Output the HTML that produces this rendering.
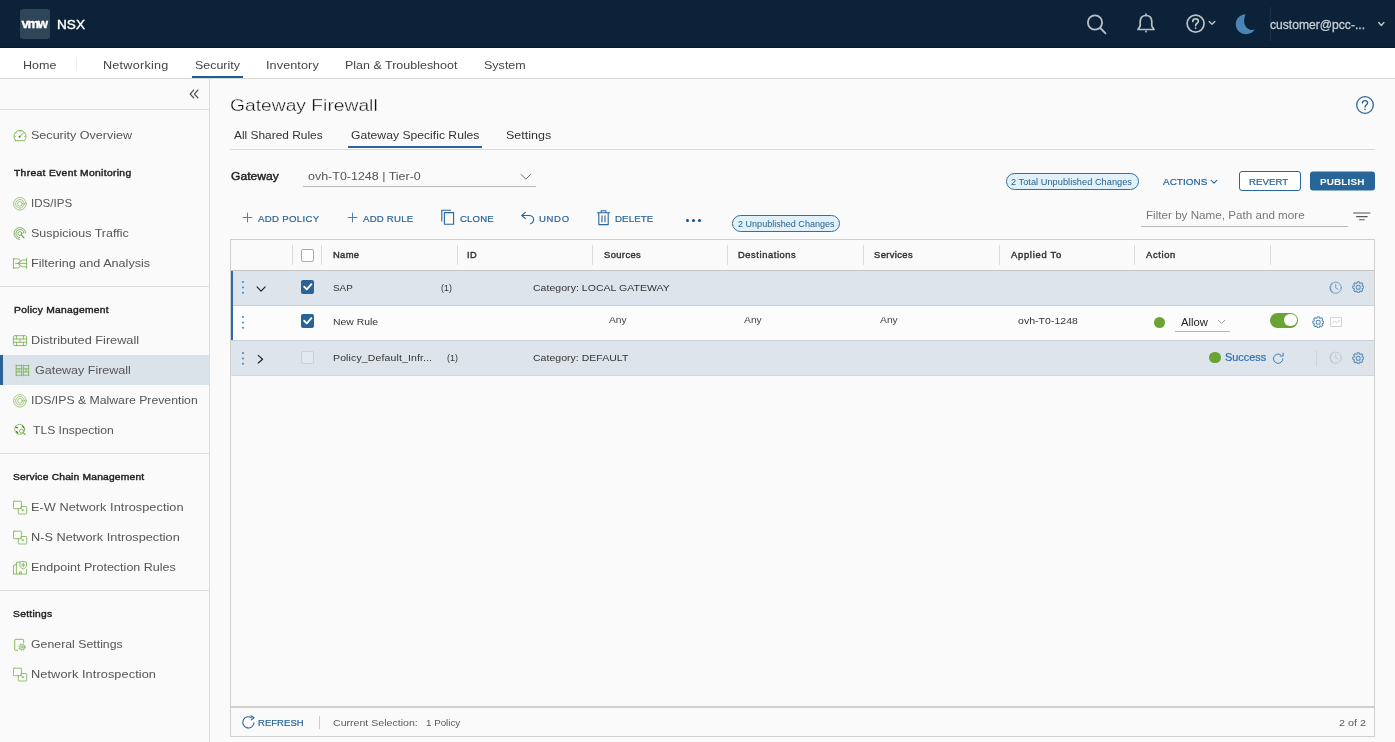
<!DOCTYPE html>
<html><head><meta charset="utf-8"><title>NSX - Gateway Firewall</title>
<style>
*{box-sizing:border-box;margin:0;padding:0}
html,body{width:1395px;height:742px;overflow:hidden;background:#fafafa;font-family:"Liberation Sans",sans-serif;color:#333}
body{position:relative}
.a{position:absolute}
.t{position:absolute;white-space:nowrap;line-height:1;transform-origin:0 0}
.hr{position:absolute;left:0;width:209px;height:1px;background:#dcdcdc}
.ic{position:absolute;left:13px;width:14px;height:14px}
.sep{position:absolute;top:245px;width:1px;height:20px;background:#ddd}
.cb{position:absolute;left:300.5px;width:13.5px;height:13.5px;border-radius:2px}
.cb.on{background:#2a6496}
.cb.off{background:#fff;border:1px solid #aaa}
.cb.dis{background:#e3e9ee;border:1px solid #c9d1d8}
.badge{position:absolute;border:1px solid #3a6d99;border-radius:9px;background:#e1f1f9}
.dots{position:absolute;left:242.1px;width:2.3px;height:2.3px;background:#3a88c8;border-radius:2px;box-shadow:0 5.4px 0 #3a88c8,0 10.8px 0 #3a88c8}
</style></head><body>
<div class="a" style="left:0;top:0;width:1395px;height:48px;background:#0c2238;border-bottom:1.4px solid #0a1836"></div>
<div class="a" style="left:20px;top:9px;width:30px;height:30px;background:#2f4558;border-radius:3px"></div>
<svg class="a" style="left:1084px;top:12px" width="26" height="26" viewBox="0 0 26 26" fill="none" stroke="#b9c1c9" stroke-width="1.8" stroke-linecap="round"><circle cx="11" cy="10.5" r="7.1"/><path d="M16.3 16 L21.5 21.3"/></svg>
<svg class="a" style="left:1134px;top:12px" width="24" height="24" viewBox="0 0 24 24" fill="none" stroke="#b9c1c9" stroke-width="1.7" stroke-linecap="round" stroke-linejoin="round"><path d="M12 3.5 C8 3.5 6.2 6.5 6.2 10 V14 L4 17.5 H20 L17.8 14 V10 C17.8 6.5 16 3.5 12 3.5 Z"/><path d="M12 2.2 V3.5"/><circle cx="12" cy="19.6" r="1" fill="#b9c1c9" stroke="none"/></svg>
<svg class="a" style="left:1185px;top:13px" width="22" height="22" viewBox="0 0 22 22" fill="none" stroke="#b9c1c9" stroke-width="1.7" stroke-linecap="round"><circle cx="10.6" cy="10.6" r="8.5"/><path d="M7.8 8.4 C7.8 6.8 9 5.8 10.6 5.8 C12.2 5.8 13.4 6.8 13.4 8.3 C13.4 10.2 10.6 10.4 10.6 12.6"/><circle cx="10.6" cy="15.2" r=".9" fill="#b9c1c9" stroke="none"/></svg>
<svg class="a" style="left:1208px;top:20px" width="8" height="6" viewBox="0 0 8 6" fill="none" stroke="#b9c1c9" stroke-width="1.5" stroke-linecap="round" stroke-linejoin="round"><path d="M1.2 1.5 L4 4.2 L6.8 1.5"/></svg>
<svg class="a" style="left:1234px;top:13px" width="22" height="22" viewBox="0 0 22 22"><path d="M11.5 1.2 C5.5 1.5 1.8 6 1.8 11 C1.8 17 6.5 21.3 12 21.3 C15.8 21.3 19 19.4 20.8 16.6 C13.5 18.6 7.2 11.5 11.5 1.2 Z" fill="#4a86b4"/></svg>
<div class="a" style="left:1269.5px;top:7px;width:1px;height:34px;background:#1b3248"></div>
<svg class="a" style="left:1377px;top:21px" width="9" height="7" viewBox="0 0 9 7" fill="none" stroke="#b9c1c9" stroke-width="1.5" stroke-linecap="round" stroke-linejoin="round"><path d="M1.7 1.6 L4.3 4.400 L6.9 1.6"/></svg>

<div class="a" style="left:0;top:48px;width:1395px;height:31px;background:#fff;border-bottom:1px solid #d6d6d6"></div>
<div class="a" style="left:76px;top:56.5px;width:1px;height:14px;background:#ededed"></div>
<div class="a" style="left:192px;top:76px;width:51px;height:2px;background:#1b5d9b"></div>

<div class="a" style="left:209px;top:79px;width:1px;height:663px;background:#dcdcdc"></div>
<svg class="a" style="left:188px;top:88px" width="12" height="12" viewBox="0 0 12 12" fill="none" stroke="#555" stroke-width="1.15" stroke-linecap="round" stroke-linejoin="round"><path d="M5.8 2 L2.2 6 L5.8 10 M10 2 L6.4 6 L10 10"/></svg>
<div class="hr" style="top:109px"></div>
<div class="hr" style="top:286px"></div>
<div class="hr" style="top:453px"></div>
<div class="hr" style="top:590px"></div>
<div class="a" style="left:0;top:355px;width:209px;height:29.6px;background:#dae3ea"></div>
<div class="a" style="left:0;top:355px;width:2.5px;height:30px;background:#2a6496"></div>
<svg class="a" style="left:0;top:0" width="210" height="742" viewBox="0 0 210 742" fill="none" stroke="#74ad47" stroke-width=".85" stroke-linecap="round" stroke-linejoin="round">
<g transform="translate(13,128.5)"><path d="M2.6 12.2 H11.4 C12.4 11.1 13 9.6 13 7.9 A6 6 0 0 0 1 7.9 C1 9.6 1.6 11.1 2.6 12.2 Z"/><path d="M7 2.5 V3.5 M1.7 7.9 H2.7 M11.3 7.9 H12.3 M3.1 4 L3.8 4.7 M10.9 4 L10.2 4.7" stroke-width=".7"/><path d="M6.8 8 L9.7 5.1" stroke-width="1"/><circle cx="6.6" cy="8.2" r="1" fill="#3d8a0c" stroke="none"/></g>
<g stroke-width=".65"><circle cx="19.9" cy="203.8" r="6.3"/><circle cx="19.9" cy="203.8" r="4.3"/><circle cx="19.9" cy="203.8" r="2.4"/></g>
<g stroke="#5f9a3f" stroke-width=".8"><path d="M19.4 239.4 A5.9 5.9 0 1 1 25.8 233.0"/><path d="M19.5 237.5 A4 4 0 1 1 23.9 233.1"/><circle cx="19.9" cy="233.5" r="1.9"/><path d="M21.3 234.9 L24 237.9" stroke-width="1.1"/></g>
<g transform="translate(13,258)" stroke-width=".8"><path d="M.5 .3 V10.5 M13.6 .3 V10.5"/><path d="M.5 .8 H4 C7 .8 8.5 3 5.2 5.4 C8.5 7.8 7 10 4 10 H.5"/><path d="M5.2 5.4 H2.5"/><path d="M5.2 5.4 L9 2 H13.6 M5.2 5.4 H13.6 M5.2 5.4 L9 8.8 H13.6"/></g>
<g stroke-width=".8"><rect x="13.4" y="335.7" width="13.2" height="9.9" rx="1.2"/><path d="M13.4 339 H26.6 M13.4 342.3 H26.6 M16.6 335.7 V339 M23.4 335.7 V339 M20 339 V342.3 M16.6 342.3 V345.6 M23.4 342.3 V345.6"/></g>
<g stroke-width=".8"><path d="M16.2 365 V375.8 M28.7 365 V375.8 M21.6 365 V375.8 M23.3 365 V375.8"/><path d="M16.2 365.6 H21.6 M16.2 368.8 H21.6 M16.2 372 H21.6 M16.2 375.2 H21.6 M23.3 365.6 H28.7 M23.3 368.8 H28.7 M23.3 372 H28.7 M23.3 375.2 H28.7 M18.9 368.8 V372 M26 368.8 V372"/></g>
<g stroke-width=".65"><circle cx="19.9" cy="400.8" r="6.3"/><circle cx="19.9" cy="400.8" r="4.3"/><circle cx="19.9" cy="400.8" r="2.4"/></g>
<g stroke-width=".8"><circle cx="19.7" cy="429.3" r="5"/><path d="M15.6 427 L17.5 427.8 M22.6 426 L23.6 427.6 M16.6 431.6 L17.6 433" stroke="#3d8a0c" stroke-width="1.3"/><circle cx="21.5" cy="431.1" r="2" fill="#fafafa"/><path d="M23 432.6 L25.3 434.7" stroke-width="1.1"/></g>
<g transform="translate(13,500.5)" stroke-width=".75"><rect x=".5" y=".7" width="7.9" height="7.5" rx=".6"/><path d="M8.4 6 H13.1 Q13.7 6 13.7 6.6 V12.9 Q13.7 13.5 13.1 13.5 H5.9 Q5.3 13.5 5.3 12.9 V8.2"/><path d="M7.4 7.2 L9.6 9.4"/><path d="M10.6 8.6 V10.6 H8.6 Z" fill="#74ad47" stroke="none"/></g><g transform="translate(13,530.5)" stroke-width=".75"><rect x=".5" y=".7" width="7.9" height="7.5" rx=".6"/><path d="M8.4 6 H13.1 Q13.7 6 13.7 6.6 V12.9 Q13.7 13.5 13.1 13.5 H5.9 Q5.3 13.5 5.3 12.9 V8.2"/><path d="M7.4 7.2 L9.6 9.4"/><path d="M10.6 8.6 V10.6 H8.6 Z" fill="#74ad47" stroke="none"/></g>
<g transform="translate(13,561)" stroke-width=".8"><path d="M.5 13 V4.6 L3.4 3.4"/><path d="M3.4 13 V1.6 L6.5 .9"/><path d="M.5 13 H13.6 V8.5"/><path d="M6.4 13 V10.8 H8.4 V13"/><path d="M10.2 .4 L13.5 1.5 V4.3 C13.500 6 12 7.3 10.2 8 C8.4 7.3 6.9 6 6.9 4.3 V1.5 Z"/><path d="M10.2 2 V6 M8.4 4 H12"/></g>
<g stroke-width=".85"><path d="M23.6 642.5 V640.2 Q23.6 639.3 22.700 639.3 H15.6 Q14.7 639.3 14.7 640.2 V649.400 Q14.7 650.3 15.6 650.3 H17.6"/><circle cx="22.1" cy="647.1" r="3.2" stroke-width="1" stroke-dasharray="1.25 1.26" stroke-linecap="butt"/><circle cx="22.1" cy="647.1" r="2.5" fill="#fafafa" stroke-width=".7"/><circle cx="22.1" cy="647.1" r="1.05" stroke-width=".65"/></g>
<g transform="translate(13,667.5)" stroke-width=".75"><rect x=".5" y=".7" width="7.9" height="7.5" rx=".6"/><path d="M8.4 6 H13.1 Q13.7 6 13.7 6.6 V12.9 Q13.7 13.5 13.1 13.5 H5.9 Q5.3 13.5 5.3 12.9 V8.2"/><path d="M7.4 7.2 L9.6 9.4"/><path d="M10.6 8.6 V10.6 H8.6 Z" fill="#74ad47" stroke="none"/></g>
</svg>

<svg class="a" style="left:1355px;top:95px" width="20" height="20" viewBox="0 0 20 20" fill="none" stroke="#28669a" stroke-width="1.3" stroke-linecap="round"><circle cx="10" cy="10" r="8.3"/><path d="M7.4 8 C7.4 6.5 8.5 5.6 10 5.6 C11.5 5.6 12.6 6.5 12.6 7.9 C12.6 9.7 10 9.9 10 12"/><circle cx="10" cy="14.3" r=".8" fill="#28669a" stroke="none"/></svg>
<div class="a" style="left:348px;top:146px;width:134px;height:2.3px;background:#2a6496"></div>
<div class="a" style="left:230px;top:149px;width:1145px;height:1px;background:#dadada"></div>
<svg class="a" style="left:520px;top:172.5px" width="12" height="8" viewBox="0 0 12 8" fill="none" stroke="#666" stroke-width="1" stroke-linecap="round" stroke-linejoin="round"><path d="M1.2 1.6 L5.8 6.2 L10.4 1.6"/></svg>
<div class="a" style="left:303px;top:186px;width:233px;height:1px;background:#b8b8b8"></div>

<div class="badge" style="left:1005.5px;top:173px;width:133px;height:17px"></div>
<svg class="a" style="left:1210px;top:178.5px" width="8" height="6" viewBox="0 0 8 6" fill="none" stroke="#28669a" stroke-width="1.1" stroke-linecap="round" stroke-linejoin="round"><path d="M1.2 1.3 L4 4.1 L6.8 1.3"/></svg>
<svg class="a" style="left:1230px;top:165px" width="150" height="32" viewBox="1230 165 150 32"><rect x="1239.5" y="171.5" width="61" height="19" rx="2.5" fill="#fff" stroke="#28669a" stroke-width="1"/><rect x="1310" y="171.4" width="65" height="19.2" rx="3" fill="#28669a"/></svg>

<svg class="a" style="left:242.2px;top:212.4px" width="11" height="11" viewBox="0 0 11 11" stroke="#3a74a6" stroke-width=".9" fill="none" stroke-linecap="round"><path d="M5.5 1.1 V9.9 M1.1 5.5 H9.9"/></svg><svg class="a" style="left:347px;top:212.4px" width="11" height="11" viewBox="0 0 11 11" stroke="#3a74a6" stroke-width=".9" fill="none" stroke-linecap="round"><path d="M5.5 1.1 V9.9 M1.1 5.5 H9.9"/></svg>
<svg class="a" style="left:440px;top:209px" width="16" height="17" viewBox="0 0 16 17" stroke="#28669a" stroke-width="1.1" fill="none" stroke-linejoin="round"><path d="M1.8 12.6 V1.3 H11"/><rect x="4.4" y="3.6" width="9.2" height="11.6"/></svg>
<svg class="a" style="left:520px;top:211px" width="15" height="14" viewBox="0 0 15 14" stroke="#28669a" stroke-width="1.1" fill="none" stroke-linecap="round" stroke-linejoin="round"><path d="M5.4 1.3 L1.8 4.5 L5.4 7.7"/><path d="M2.1 4.5 H9 C11.8 4.5 13.6 6.2 13.6 8.6 C13.6 11 12.2 12.3 10.4 12.8"/></svg>
<svg class="a" style="left:596px;top:209px" width="15" height="17" viewBox="0 0 15 17" stroke="#28669a" stroke-width="1.1" fill="none" stroke-linecap="round" stroke-linejoin="round"><path d="M1.4 3.7 H13.6 M5.2 3.5 V1.7 H9.8 V3.5"/><path d="M2.8 4 V15.6 H12.2 V4"/><path d="M6 6.7 V12.8 M9 6.7 V12.8"/></svg>
<div class="a" style="left:686px;top:218.5px;width:3px;height:3px;border-radius:2px;background:#1a4f86;box-shadow:6px 0 0 #1a4f86,12px 0 0 #1a4f86"></div>
<div class="badge" style="left:731.8px;top:214.7px;width:108.6px;height:17px"></div>
<div class="a" style="left:1141px;top:225.5px;width:207px;height:1px;background:#b8b8b8"></div>
<svg class="a" style="left:1352px;top:210px" width="20" height="12" viewBox="0 0 20 12" stroke="#555" stroke-width="1.1" fill="none" stroke-linecap="round"><path d="M1.6 3 H18 M4.6 6.6 H15.2 M7.6 9.8 H12.2"/></svg>

<div class="a" style="left:230px;top:239px;width:1145px;height:498px;border:1px solid #cfcfcf;background:#fafafa"></div>
<div class="a" style="left:231px;top:269.5px;width:1143px;height:1.5px;background:#c4c4c4"></div>
<div class="sep" style="left:292px"></div><div class="sep" style="left:321px"></div><div class="sep" style="left:456.5px"></div><div class="sep" style="left:592px"></div><div class="sep" style="left:727px"></div><div class="sep" style="left:863px"></div><div class="sep" style="left:998.5px"></div><div class="sep" style="left:1134px"></div><div class="sep" style="left:1269.5px"></div>
<div class="cb off" style="top:248.6px"></div>

<div class="a" style="left:231px;top:271px;width:1143px;height:33.5px;background:#dde4eb"></div>
<div class="a" style="left:231px;top:304.5px;width:1143px;height:1px;background:#c9d0d6"></div>
<div class="a" style="left:231px;top:305.5px;width:1143px;height:34.5px;background:#fcfcfc"></div>
<div class="a" style="left:231px;top:340px;width:1143px;height:1px;background:#c9d0d6"></div>
<div class="a" style="left:231px;top:341px;width:1143px;height:34px;background:#dde4eb"></div>
<div class="a" style="left:231px;top:374.500px;width:1143px;height:1.2px;background:#d3d8dc"></div>
<div class="a" style="left:231px;top:271px;width:2.4px;height:69px;background:#2a6cb0"></div>
<div class="dots" style="top:281.2px"></div><div class="dots" style="top:315.7px"></div><div class="dots" style="top:351.7px"></div>
<svg class="a" style="left:255px;top:285px" width="12" height="8" viewBox="0 0 12 8" fill="none" stroke="#222" stroke-width="1.15" stroke-linecap="round" stroke-linejoin="round"><path d="M2 1.9 L6.1 6.1 L10.2 1.9"/></svg>
<svg class="a" style="left:256px;top:353px" width="9" height="12" viewBox="0 0 9 12" fill="none" stroke="#222" stroke-width="1.15" stroke-linecap="round" stroke-linejoin="round"><path d="M2.2 2.4 L6.6 6.2 L2.2 10"/></svg>
<div class="cb on" style="top:280.3px"><svg style="position:absolute;left:0;top:0" width="13.5" height="13.5" viewBox="0 0 14 14" fill="none" stroke="#fff" stroke-width="1.9" stroke-linecap="round" stroke-linejoin="round"><path d="M3.3 7 L6 9.7 L10.8 4.3"/></svg></div>
<div class="cb on" style="top:314.3px"><svg style="position:absolute;left:0;top:0" width="13.5" height="13.5" viewBox="0 0 14 14" fill="none" stroke="#fff" stroke-width="1.9" stroke-linecap="round" stroke-linejoin="round"><path d="M3.3 7 L6 9.7 L10.8 4.3"/></svg></div>
<div class="cb dis" style="top:350.5px"></div>
<svg class="a" style="left:1329.1px;top:280.5px" width="13.4" height="13.4" viewBox="0 0 14 14" fill="none" stroke="#6f99be" stroke-width=".95" stroke-linecap="round" stroke-linejoin="round"><circle cx="7" cy="7" r="5.9"/><path d="M7 3.4 V7.3 L9.3 8.6"/><path d="M3.3 2.6 A6 6 0 0 0 3.6 11.700" stroke-width="1.5" opacity=".75"/></svg><svg class="a" style="left:1351.9px;top:281px" width="12.4" height="12.4" viewBox="0 0 14 14" fill="none" stroke="#5b8ab5" stroke-width="1.15" stroke-linejoin="round"><path d="M5.66 2.34 L5.96 0.79 L8.04 0.79 L8.34 2.34 L9.35 2.76 L10.66 1.87 L12.13 3.34 L11.24 4.65 L11.66 5.66 L13.21 5.96 L13.21 8.04 L11.66 8.34 L11.24 9.35 L12.13 10.66 L10.66 12.13 L9.35 11.24 L8.34 11.66 L8.04 13.21 L5.96 13.21 L5.66 11.66 L4.65 11.24 L3.34 12.13 L1.87 10.66 L2.76 9.35 L2.34 8.34 L0.79 8.04 L0.79 5.96 L2.34 5.66 L2.76 4.65 L1.87 3.34 L3.34 1.87 L4.65 2.76 Z"/><circle cx="7" cy="7" r="2.3"/></svg>
<div class="a" style="left:1154px;top:317px;width:11px;height:11px;border-radius:6px;background:#6ba334"></div>
<svg class="a" style="left:1216.6px;top:319px" width="9" height="6" viewBox="0 0 9 6" fill="none" stroke="#999" stroke-width="1" stroke-linecap="round" stroke-linejoin="round"><path d="M1.2 1.2 L4.5 4.5 L7.8 1.2"/></svg>
<div class="a" style="left:1175px;top:331px;width:55px;height:1px;background:#b8b8b8"></div>
<div class="a" style="left:1270.4px;top:312.6px;width:27.3px;height:15px;border-radius:8px;background:#6ba334"><div style="position:absolute;right:1.2px;top:1.2px;width:12.6px;height:12.6px;border-radius:7px;background:#fff"></div></div>
<svg class="a" style="left:1311.6px;top:316.1px" width="12.4" height="12.4" viewBox="0 0 14 14" fill="none" stroke="#5b8ab5" stroke-width="1.15" stroke-linejoin="round"><path d="M5.66 2.34 L5.96 0.79 L8.04 0.79 L8.34 2.34 L9.35 2.76 L10.66 1.87 L12.13 3.34 L11.24 4.65 L11.66 5.66 L13.21 5.96 L13.21 8.04 L11.66 8.34 L11.24 9.35 L12.13 10.66 L10.66 12.13 L9.35 11.24 L8.34 11.66 L8.04 13.21 L5.96 13.21 L5.66 11.66 L4.65 11.24 L3.34 12.13 L1.87 10.66 L2.76 9.35 L2.34 8.34 L0.79 8.04 L0.79 5.96 L2.34 5.66 L2.76 4.65 L1.87 3.34 L3.34 1.87 L4.65 2.76 Z"/><circle cx="7" cy="7" r="2.3"/></svg>
<svg class="a" style="left:1330px;top:317px" width="12" height="10" viewBox="0 0 12 10" fill="none" stroke="#cfcfcf" stroke-width=".9" stroke-linejoin="round"><rect x=".5" y=".5" width="11" height="9"/><path d="M2 6.5 L4.5 4 L6.5 6 L9.8 3.2"/></svg>
<div class="a" style="left:1209.4px;top:351.5px;width:11.6px;height:11.6px;border-radius:6px;background:#6ba334"></div>
<svg class="a" style="left:1271.6px;top:351.6px" width="12.4" height="12.4" viewBox="0 0 14 14" fill="none" stroke="#3f7ab5" stroke-width="1.1" stroke-linecap="round" stroke-linejoin="round"><path d="M12.3 7.6 A5.3 5.3 0 1 1 9.6 2.9"/><path d="M12.6 1.3 V4.6 H9.3"/></svg>
<div class="a" style="left:1316.4px;top:350px;width:1px;height:16px;background:#cdd3d8"></div>
<svg class="a" style="left:1328.9px;top:350.9px" width="13.4" height="13.4" viewBox="0 0 14 14" fill="none" stroke="#bfc5ca" stroke-width=".95" stroke-linecap="round" stroke-linejoin="round"><circle cx="7" cy="7" r="5.9"/><path d="M7 3.4 V7.3 L9.3 8.6"/><path d="M3.3 2.6 A6 6 0 0 0 3.6 11.700" stroke-width="1.5" opacity=".75"/></svg><svg class="a" style="left:1351.9px;top:351.5px" width="12.4" height="12.4" viewBox="0 0 14 14" fill="none" stroke="#5b8ab5" stroke-width="1.15" stroke-linejoin="round"><path d="M5.66 2.34 L5.96 0.79 L8.04 0.79 L8.34 2.34 L9.35 2.76 L10.66 1.87 L12.13 3.34 L11.24 4.65 L11.66 5.66 L13.21 5.96 L13.21 8.04 L11.66 8.34 L11.24 9.35 L12.13 10.66 L10.66 12.13 L9.35 11.24 L8.34 11.66 L8.04 13.21 L5.96 13.21 L5.66 11.66 L4.65 11.24 L3.34 12.13 L1.87 10.66 L2.76 9.35 L2.34 8.34 L0.79 8.04 L0.79 5.96 L2.34 5.66 L2.76 4.65 L1.87 3.34 L3.34 1.87 L4.65 2.76 Z"/><circle cx="7" cy="7" r="2.3"/></svg>

<div class="a" style="left:231px;top:706px;width:1143px;height:1.5px;background:#cfcfcf"></div>
<svg class="a" style="left:241px;top:715px" width="15" height="15" viewBox="0 0 15 15" fill="none" stroke="#28669a" stroke-width="1.1" stroke-linecap="round" stroke-linejoin="round"><path d="M13 7.8 A5.6 5.6 0 1 1 10.3 2.6"/><path d="M10 .8 L13 2.7 L10.3 4.9"/></svg>
<div class="a" style="left:318.5px;top:715.5px;width:1px;height:13px;background:#ccc"></div>
<div style="position:absolute;left:0;top:0;width:1395px;height:742px;will-change:transform">
<div class="t" style="left:21.6px;top:16.9px;transform:scaleX(1.0);font-size:13.2px;font-weight:bold;-webkit-text-stroke:0.35px #fff;color:#fff;letter-spacing:-1.45px">vmw</div>
<div class="t" style="left:57.23px;top:17.8px;transform:scaleX(1.0151);font-size:13.4px;-webkit-text-stroke:0.4px #fff;color:#fff;letter-spacing:0.0px">NSX</div>
<div class="t" style="left:1270.28px;top:18.5px;transform:scaleX(0.9459);font-size:12.8px;-webkit-text-stroke:0.3px #c9d0d7;color:#c9d0d7;letter-spacing:0.0px">customer@pcc-...</div>
<div class="t" style="left:23.13px;top:59.6px;transform:scaleX(1.1192);font-size:11.2px;color:#444;letter-spacing:0.0px">Home</div>
<div class="t" style="left:103.02px;top:59.6px;transform:scaleX(1.1282);font-size:11.2px;color:#444;letter-spacing:0.216px">Networking</div>
<div class="t" style="left:194.9px;top:59.6px;transform:scaleX(1.112);font-size:11.2px;color:#444;letter-spacing:0.0px">Security</div>
<div class="t" style="left:265.72px;top:59.6px;transform:scaleX(1.13);font-size:11.2px;color:#444;letter-spacing:0.078px">Inventory</div>
<div class="t" style="left:345.43px;top:59.6px;transform:scaleX(1.1158);font-size:11.2px;color:#444;letter-spacing:0.0px">Plan &amp; Troubleshoot</div>
<div class="t" style="left:484.29px;top:59.6px;transform:scaleX(1.1194);font-size:11.2px;color:#444;letter-spacing:0.0px">System</div>
<div class="t" style="left:31.1px;top:130.2px;transform:scaleX(1.1111);font-size:11.3px;color:#555;letter-spacing:-0.0px">Security Overview</div>
<div class="t" style="left:31.13px;top:198.2px;transform:scaleX(1.0258);font-size:11.3px;color:#555;letter-spacing:0.0px">IDS/IPS</div>
<div class="t" style="left:31.1px;top:228.2px;transform:scaleX(1.1057);font-size:11.3px;color:#555;letter-spacing:0.0px">Suspicious Traffic</div>
<div class="t" style="left:31.03px;top:258.2px;transform:scaleX(1.1161);font-size:11.3px;color:#555;letter-spacing:0.0px">Filtering and Analysis</div>
<div class="t" style="left:31.02px;top:335.2px;transform:scaleX(1.1253);font-size:11.3px;color:#555;letter-spacing:0.0px">Distributed Firewall</div>
<div class="t" style="left:34.5px;top:365.2px;transform:scaleX(1.1058);font-size:11.3px;color:#555;letter-spacing:0.0px">Gateway Firewall</div>
<div class="t" style="left:30.57px;top:395.2px;transform:scaleX(1.0838);font-size:11.3px;color:#555;letter-spacing:0.0px">IDS/IPS &amp; Malware Prevention</div>
<div class="t" style="left:32.58px;top:425.2px;transform:scaleX(1.0718);font-size:11.3px;color:#555;letter-spacing:0.0px">TLS Inspection</div>
<div class="t" style="left:31.02px;top:502.0px;transform:scaleX(1.1293);font-size:11.3px;color:#555;letter-spacing:0.032px">E-W Network Introspection</div>
<div class="t" style="left:31.02px;top:532.0px;transform:scaleX(1.1283);font-size:11.3px;color:#555;letter-spacing:0.0px">N-S Network Introspection</div>
<div class="t" style="left:31.04px;top:562.0px;transform:scaleX(1.1087);font-size:11.3px;color:#555;letter-spacing:0.0px">Endpoint Protection Rules</div>
<div class="t" style="left:31.11px;top:639.0px;transform:scaleX(1.0901);font-size:11.3px;color:#555;letter-spacing:0.0px">General Settings</div>
<div class="t" style="left:31.02px;top:669.0px;transform:scaleX(1.1287);font-size:11.3px;color:#555;letter-spacing:0.072px">Network Introspection</div>
<div class="t" style="left:14.15px;top:169.2px;transform:scaleX(1.129);font-size:9.1px;-webkit-text-stroke:0.4px #222;color:#222;letter-spacing:0.303px">Threat Event Monitoring</div>
<div class="t" style="left:13.58px;top:306.4px;transform:scaleX(1.13);font-size:9.1px;-webkit-text-stroke:0.4px #222;color:#222;letter-spacing:0.247px">Policy Management</div>
<div class="t" style="left:13.37px;top:473.2px;transform:scaleX(1.13);font-size:9.1px;-webkit-text-stroke:0.4px #222;color:#222;letter-spacing:0.168px">Service Chain Management</div>
<div class="t" style="left:13.37px;top:610.4px;transform:scaleX(1.1271);font-size:9.1px;-webkit-text-stroke:0.4px #222;color:#222;letter-spacing:0.269px">Settings</div>
<div class="t" style="left:230.44px;top:96.6px;transform:scaleX(1.1143);font-size:17.3px;-webkit-text-stroke:0.35px #fafafa;color:#111;letter-spacing:0.0px">Gateway Firewall</div>
<div class="t" style="left:234.35px;top:130px;transform:scaleX(1.0639);font-size:11.2px;color:#333;letter-spacing:0.0px">All Shared Rules</div>
<div class="t" style="left:350.61px;top:130px;transform:scaleX(1.0873);font-size:11.2px;color:#333;letter-spacing:0.0px">Gateway Specific Rules</div>
<div class="t" style="left:506.49px;top:130px;transform:scaleX(1.1164);font-size:11.2px;color:#333;letter-spacing:0.0px">Settings</div>
<div class="t" style="left:230.88px;top:171.2px;transform:scaleX(1.1036);font-size:11.0px;-webkit-text-stroke:0.4px #222;color:#222;letter-spacing:0.0px">Gateway</div>
<div class="t" style="left:307.99px;top:171.2px;transform:scaleX(1.1241);font-size:11.1px;color:#555;letter-spacing:0.0px">ovh-T0-1248 | Tier-0</div>
<div class="t" style="left:1010.98px;top:178.6px;transform:scaleX(1.1277);font-size:8.2px;color:#2a5f8c;letter-spacing:0.018px">2 Total Unpublished Changes</div>
<div class="t" style="left:1163.35px;top:178.1px;transform:scaleX(1.1287);font-size:8.8px;-webkit-text-stroke:0.2px #28669a;color:#28669a;letter-spacing:0.017px">ACTIONS</div>
<div class="t" style="left:1249.3px;top:178px;transform:scaleX(1.1015);font-size:8.8px;-webkit-text-stroke:0.2px #28669a;color:#28669a;letter-spacing:0.0px">REVERT</div>
<div class="t" style="left:1320.48px;top:178px;transform:scaleX(1.13);font-size:8.8px;font-weight:bold;color:#fff;letter-spacing:0.107px">PUBLISH</div>
<div class="t" style="left:258.35px;top:214.6px;transform:scaleX(1.13);font-size:8.5px;-webkit-text-stroke:0.2px #28669a;color:#28669a;letter-spacing:0.296px">ADD POLICY</div>
<div class="t" style="left:363.35px;top:214.6px;transform:scaleX(1.1278);font-size:8.5px;-webkit-text-stroke:0.2px #28669a;color:#28669a;letter-spacing:0.214px">ADD RULE</div>
<div class="t" style="left:460.07px;top:214.6px;transform:scaleX(1.13);font-size:8.5px;-webkit-text-stroke:0.2px #28669a;color:#28669a;letter-spacing:0.135px">CLONE</div>
<div class="t" style="left:539.08px;top:214.6px;transform:scaleX(1.1223);font-size:8.5px;-webkit-text-stroke:0.2px #28669a;color:#28669a;letter-spacing:0.589px">UNDO</div>
<div class="t" style="left:615.08px;top:214.6px;transform:scaleX(1.13);font-size:8.5px;-webkit-text-stroke:0.2px #28669a;color:#28669a;letter-spacing:0.134px">DELETE</div>
<div class="t" style="left:737.6px;top:220.5px;transform:scaleX(1.105);font-size:8.2px;color:#2a5f8c;letter-spacing:0.0px">2 Unpublished Changes</div>
<div class="t" style="left:1145.52px;top:210.4px;transform:scaleX(1.1097);font-size:10.5px;color:#777;letter-spacing:0.0px">Filter by Name, Path and more</div>
<div class="t" style="left:332.58px;top:250.8px;transform:scaleX(1.13);font-size:8.3px;-webkit-text-stroke:0.38px #333;color:#333;letter-spacing:0.296px">Name</div>
<div class="t" style="left:467.09px;top:250.8px;transform:scaleX(1.1098);font-size:8.3px;-webkit-text-stroke:0.38px #333;color:#333;letter-spacing:0.356px">ID</div>
<div class="t" style="left:603.57px;top:250.8px;transform:scaleX(1.13);font-size:8.3px;-webkit-text-stroke:0.38px #333;color:#333;letter-spacing:0.349px">Sources</div>
<div class="t" style="left:737.98px;top:250.8px;transform:scaleX(1.1251);font-size:8.3px;-webkit-text-stroke:0.38px #333;color:#333;letter-spacing:0.519px">Destinations</div>
<div class="t" style="left:874.37px;top:250.8px;transform:scaleX(1.13);font-size:8.3px;-webkit-text-stroke:0.38px #333;color:#333;letter-spacing:0.342px">Services</div>
<div class="t" style="left:1011.13px;top:250.8px;transform:scaleX(1.13);font-size:8.3px;-webkit-text-stroke:0.38px #333;color:#333;letter-spacing:0.64px">Applied To</div>
<div class="t" style="left:1145.93px;top:250.8px;transform:scaleX(1.13);font-size:8.3px;-webkit-text-stroke:0.38px #333;color:#333;letter-spacing:0.568px">Action</div>
<div class="t" style="left:332.81px;top:284.2px;transform:scaleX(1.063);font-size:9.3px;color:#333;letter-spacing:0.0px">SAP</div>
<div class="t" style="left:440.87px;top:284.2px;transform:scaleX(0.9561);font-size:9.3px;color:#333;letter-spacing:0.0px">(1)</div>
<div class="t" style="left:532.98px;top:284.2px;transform:scaleX(1.1296);font-size:9.3px;color:#333;letter-spacing:0.035px">Category: LOCAL GATEWAY</div>
<div class="t" style="left:333.01px;top:318px;transform:scaleX(1.1173);font-size:9.3px;color:#333;letter-spacing:0.0px">New Rule</div>
<div class="t" style="left:608.55px;top:316px;transform:scaleX(1.1033);font-size:9.3px;color:#444;letter-spacing:0.0px">Any</div>
<div class="t" style="left:744.15px;top:316px;transform:scaleX(1.1094);font-size:9.3px;color:#444;letter-spacing:0.0px">Any</div>
<div class="t" style="left:880.15px;top:316px;transform:scaleX(1.1094);font-size:9.3px;color:#444;letter-spacing:0.0px">Any</div>
<div class="t" style="left:1018.18px;top:317px;transform:scaleX(1.129);font-size:9.3px;color:#333;letter-spacing:0.037px">ovh-T0-1248</div>
<div class="t" style="left:1180.55px;top:317.6px;transform:scaleX(1.1188);font-size:10.1px;color:#222;letter-spacing:0.0px">Allow</div>
<div class="t" style="left:333.0px;top:354.2px;transform:scaleX(1.13);font-size:9.3px;color:#333;letter-spacing:0.112px">Policy_Default_Infr...</div>
<div class="t" style="left:446.87px;top:354.2px;transform:scaleX(0.9561);font-size:9.3px;color:#333;letter-spacing:0.0px">(1)</div>
<div class="t" style="left:532.98px;top:354.2px;transform:scaleX(1.1288);font-size:9.3px;color:#333;letter-spacing:0.024px">Category: DEFAULT</div>
<div class="t" style="left:1224.62px;top:353px;transform:scaleX(1.0675);font-size:10.2px;-webkit-text-stroke:0.2px #2a6cb0;color:#2a6cb0;letter-spacing:0.0px">Success</div>
<div class="t" style="left:258.08px;top:719.4px;transform:scaleX(1.13);font-size:8.4px;-webkit-text-stroke:0.2px #28669a;color:#28669a;letter-spacing:0.055px">REFRESH</div>
<div class="t" style="left:332.8px;top:717.5px;transform:scaleX(1.1033);font-size:9.6px;color:#5a5a5a;letter-spacing:0.0px">Current Selection:</div>
<div class="t" style="left:426.09px;top:717.5px;transform:scaleX(1.0168);font-size:9.6px;color:#5a5a5a;letter-spacing:0.0px">1 Policy</div>
<div class="t" style="left:1338.79px;top:717.5px;transform:scaleX(1.1239);font-size:9.6px;color:#5a5a5a;letter-spacing:-0.0px">2 of 2</div>

</div>
</body></html>
